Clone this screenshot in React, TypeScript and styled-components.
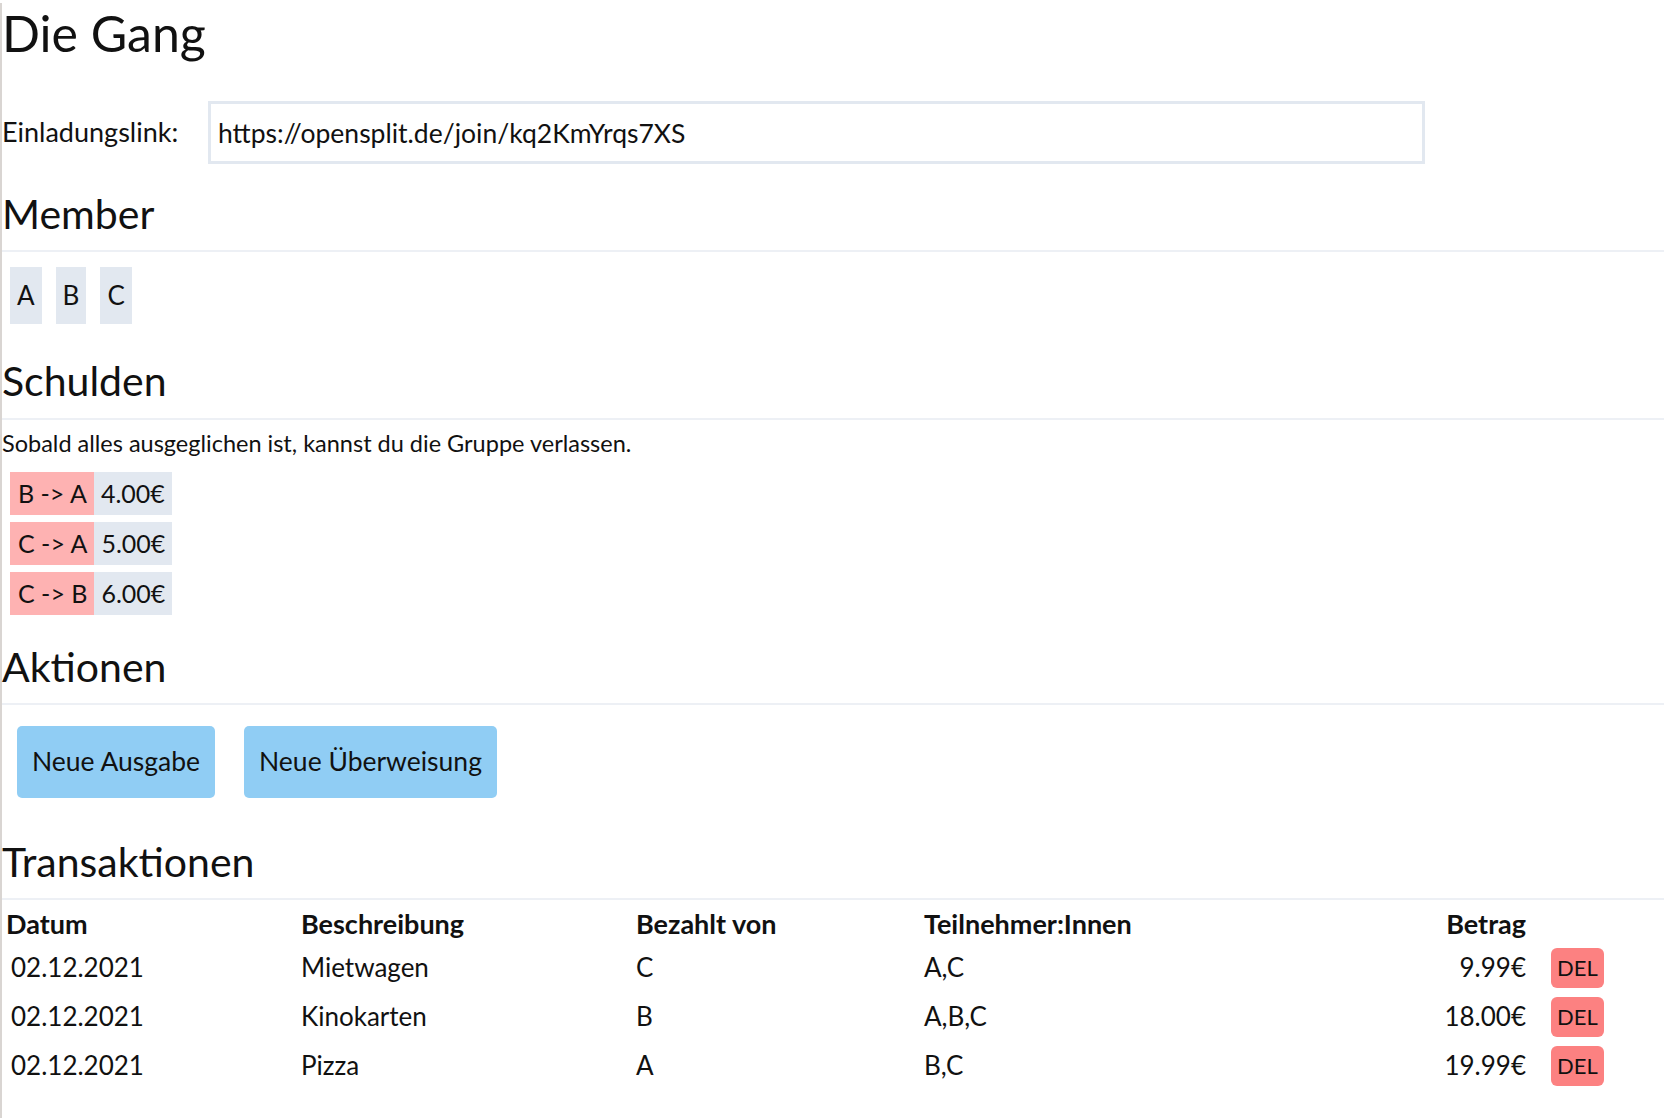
import React from 'react';
import styled, {createGlobalStyle} from 'styled-components';

const GlobalStyle = createGlobalStyle`
    html, body {
        margin: 0;
        padding: 0;
        background: #ffffff;
    }
    body {
        font-family: Lato, "Open Sans", sans-serif;
        color: #111111;
    }
    * {
        box-sizing: border-box;
    }
`;

type Debt = { from: string; to: string; amount: string };
type Transaction = { date: string; text: string; paidBy: string; members: string; amount: string };

const members = ['A', 'B', 'C'];

const debts: Debt[] = [
    {from: 'B', to: 'A', amount: '4.00€'},
    {from: 'C', to: 'A', amount: '5.00€'},
    {from: 'C', to: 'B', amount: '6.00€'},
];

const transactions: Transaction[] = [
    {date: '02.12.2021', text: 'Mietwagen', paidBy: 'C', members: 'A,C', amount: '9.99€'},
    {date: '02.12.2021', text: 'Kinokarten', paidBy: 'B', members: 'A,B,C', amount: '18.00€'},
    {date: '02.12.2021', text: 'Pizza', paidBy: 'A', members: 'B,C', amount: '19.99€'},
];

export default function App() {
    return (
        <Page>
            <GlobalStyle/>
            <Title>Die Gang</Title>
            <InviteRow>
                <InviteLabel>Einladungslink:</InviteLabel>
                <InviteInput readOnly value={'https://opensplit.de/join/kq2KmYrqs7XS'}/>
            </InviteRow>

            <SectionTitle $top={25}>Member</SectionTitle>
            <ChipList>
                {members.map(m => <Chip key={m}>{m}</Chip>)}
            </ChipList>

            <SectionTitle $top={32}>Schulden</SectionTitle>
            <Hint>Sobald alles ausgeglichen ist, kannst du die Gruppe verlassen.</Hint>
            <DebtList>
                {debts.map(d => (
                    <DebtRow key={d.from + d.to}>
                        <DebtPair>{d.from} -&gt; {d.to}</DebtPair>
                        <DebtAmount>{d.amount}</DebtAmount>
                    </DebtRow>
                ))}
            </DebtList>

            <SectionTitle $top={27}>Aktionen</SectionTitle>
            <ActionBar>
                <ActionButton>Neue Ausgabe</ActionButton>
                <ActionButton>Neue Überweisung</ActionButton>
            </ActionBar>

            <SectionTitle $top={39}>Transaktionen</SectionTitle>
            <Table>
                <colgroup>
                    <col style={{width: 295}}/>
                    <col style={{width: 335}}/>
                    <col style={{width: 288}}/>
                    <col style={{width: 480}}/>
                    <col style={{width: 130}}/>
                    <col/>
                </colgroup>
                <thead>
                <tr>
                    <Th>Datum</Th>
                    <Th>Beschreibung</Th>
                    <Th>Bezahlt von</Th>
                    <Th>Teilnehmer:Innen</Th>
                    <Th $right>Betrag</Th>
                    <Th/>
                </tr>
                </thead>
                <tbody>
                {transactions.map(t => (
                    <tr key={t.text}>
                        <DateCell>{t.date}</DateCell>
                        <Td>{t.text}</Td>
                        <Td>{t.paidBy}</Td>
                        <Td>{t.members}</Td>
                        <Td $right>{t.amount}</Td>
                        <ButtonCell><DeleteButton>DEL</DeleteButton></ButtonCell>
                    </tr>
                ))}
                </tbody>
            </Table>
        </Page>
    );
}

const Page = styled.div`
    min-height: 100vh;
    border-left: 2px solid #d9d5d2;
    padding-bottom: 20px;
`;

const Title = styled.h1`
    font-size: 50px;
    font-weight: 400;
    line-height: 1.2;
    margin: 3px 0 0;
`;

const InviteRow = styled.div`
    display: flex;
    align-items: center;
    margin-top: 38px;
`;

const InviteLabel = styled.label`
    width: 206px;
    font-size: 27px;
    line-height: 1.2;
`;

const InviteInput = styled.input`
    width: 1217px;
    height: 63px;
    border: 3px solid #e2e8f0;
    padding: 0 7px;
    font-family: Lato, sans-serif;
    font-size: 26.5px;
    color: #111111;
    outline: none;
`;

const SectionTitle = styled.h2<{ $top: number }>`
    font-size: 41px;
    font-weight: 400;
    line-height: 1.2;
    margin: ${p => p.$top}px 0 0;
    padding-bottom: 12px;
    border-bottom: 2px solid #edf0f5;
`;

const ChipList = styled.div`
    display: flex;
    gap: 14px;
    margin: 15px 0 0 8px;
`;

const Chip = styled.span`
    background: #e2e8f0;
    font-size: 26px;
    line-height: 1.2;
    padding: 13px 7px;
`;

const Hint = styled.p`
    font-size: 23.5px;
    line-height: 1.2;
    margin: 9px 0 0;
`;

const DebtList = styled.div`
    display: flex;
    flex-direction: column;
    align-items: flex-start;
    gap: 7px;
    margin: 15px 0 0 8px;
`;

const DebtRow = styled.div`
    display: flex;
    font-size: 25px;
    line-height: 1.2;
`;

const DebtPair = styled.span`
    background: #feb2b2;
    padding: 6.5px 7px 6.5px 8px;
`;

const DebtAmount = styled.span`
    background: #e2e8f0;
    padding: 6.5px 7px;
`;

const ActionBar = styled.div`
    display: flex;
    gap: 29px;
    margin: 21px 0 0 15px;
`;

const ActionButton = styled.button`
    background: #90cdf4;
    border: none;
    border-radius: 5px;
    font-family: Lato, sans-serif;
    font-size: 26.5px;
    line-height: 1.2;
    color: #111111;
    padding: 20px 15px;
`;

const Table = styled.table`
    width: 100%;
    table-layout: fixed;
    border-collapse: collapse;
    font-size: 26px;
    line-height: 1.2;
`;

const Th = styled.th<{ $right?: boolean }>`
    font-size: 27px;
    font-weight: 700;
    text-align: ${p => (p.$right ? 'right' : 'left')};
    padding: 8px 4px 3px;
`;

const Td = styled.td<{ $right?: boolean }>`
    text-align: ${p => (p.$right ? 'right' : 'left')};
    padding: 4px 4px;
    height: 49px;
`;

const DateCell = styled(Td)`
    padding-left: 9px;
`;

const ButtonCell = styled.td`
    padding: 4px 0 4px 21px;
`;

const DeleteButton = styled.button`
    background: #fc8181;
    border: none;
    border-radius: 6px;
    font-family: Lato, sans-serif;
    font-size: 22px;
    line-height: 1.2;
    color: #111111;
    padding: 7px 6px;
`;
